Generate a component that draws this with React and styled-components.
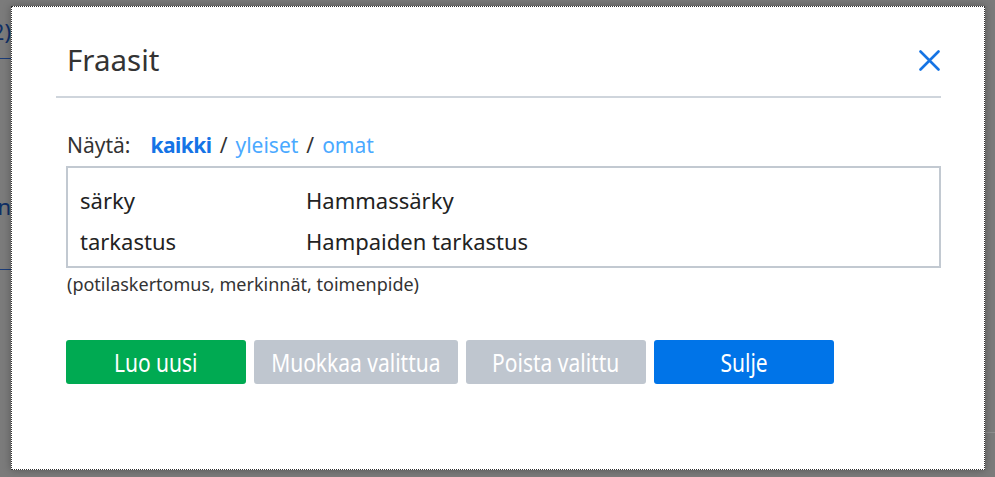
import React from "react";
import styled, { createGlobalStyle } from "styled-components";

const Global = createGlobalStyle`
  html, body {
    margin: 0;
    padding: 0;
    background: #7a7a7a;
  }
  body {
    font-family: "Noto Sans", "Open Sans", sans-serif;
    color: #333;
  }
`;

const Page = styled.div`
  position: relative;
  width: 995px;
  height: 477px;
  overflow: hidden;
  background: #7b7b7b;
`;

const Backdrop = styled.div`
  display: flex;
  justify-content: space-between;
  height: 100%;
`;

const SideStrip = styled.div`
  width: 11px;
  overflow: hidden;
  display: flex;
  flex-direction: column;
  align-items: flex-end;
  color: #0f2f66;
`;

const StripText = styled.div`
  white-space: nowrap;
  font-size: 22px;
  line-height: 26px;
  margin-top: ${(p) => p.$top}px;
`;

const StripLine = styled.div`
  width: 100%;
  height: 1px;
  flex-shrink: 0;
  background: ${(p) => p.$color || "#1b3c78"};
  margin-top: ${(p) => p.$top}px;
`;

const Dialog = styled.div`
  position: absolute;
  top: 6px;
  left: 11px;
  width: 974px;
  height: 464px;
  box-sizing: border-box;
  background: #fff;
  border: 1px dotted #333;
  padding: 0 43px 0 44px;
  box-shadow: 0 0 8px rgba(0, 0, 0, 0.3);
`;

const Header = styled.div`
  display: flex;
  align-items: center;
  justify-content: space-between;
  padding: 35px 1px 18px 11px;
  border-bottom: 2px solid #cfd5dc;
`;

const Title = styled.h1`
  margin: 0;
  font-size: 29.5px;
  line-height: 36px;
  font-weight: 400;
  color: #333;
`;

const CloseButton = styled.button`
  border: 0;
  background: none;
  padding: 0;
  width: 21px;
  height: 21px;
  cursor: pointer;
  display: flex;
  svg {
    display: block;
  }
`;

const Body = styled.div`
  padding: 33px 0 0 10px;
`;

const FilterRow = styled.div`
  display: flex;
  align-items: center;
  font-size: 21px;
  line-height: 28px;
  padding-left: 1px;
`;

const FilterLabel = styled.span`
  margin-right: 20px;
`;

const FilterLink = styled.a`
  color: ${(p) => (p.$active ? "#1574e6" : "#4aa9ff")};
  font-weight: ${(p) => (p.$active ? 700 : 400)};
  letter-spacing: ${(p) => (p.$active ? "-0.5px" : "0")};
  text-decoration: none;
  cursor: pointer;
`;

const Slash = styled.span`
  margin: 0 8px;
`;

const List = styled.div`
  margin-top: 7px;
  border: 2px solid #c2c9d1;
  padding: 11px 12px 5px;
`;

const Row = styled.div`
  display: grid;
  grid-template-columns: 226px 1fr;
  height: 41px;
  align-items: center;
  font-size: 22px;
  color: #222;
`;

const Note = styled.div`
  margin-top: 5px;
  font-size: 18px;
  line-height: 22px;
  color: #333;
  padding-left: 1px;
`;

const Buttons = styled.div`
  display: flex;
  gap: 8px;
  margin-top: 45px;
`;

const ActionButton = styled.button`
  width: ${(p) => p.$width || 180}px;
  height: 44px;
  border: 0;
  border-radius: 3px;
  background: ${(p) => p.$bg};
  color: #fff;
  font-family: "Noto Sans", sans-serif;
  font-size: 25px;
  padding: 0;
  cursor: ${(p) => (p.disabled ? "default" : "pointer")};
  display: flex;
  align-items: center;
  justify-content: center;
  span {
    display: inline-block;
    white-space: nowrap;
    transform: scaleX(0.84);
  }
`;

const phrases = [
  { key: "särky", text: "Hammassärky" },
  { key: "tarkastus", text: "Hampaiden tarkastus" },
];

export default function App() {
  return (
    <>
      <Global />
      <Page>
        <Backdrop>
          <SideStrip>
            <StripText $top={18}>Hoitojaksot (2)</StripText>
            <StripLine $top={14} />
            <StripText $top={134}>Toimenpiteet ja tutkimukset jatkohoitoon</StripText>
            <StripLine $top={50} />
          </SideStrip>
          <SideStrip>
            <StripLine $top={432} $color="#8e8e8e" />
          </SideStrip>
        </Backdrop>
        <Dialog>
          <Header>
            <Title>Fraasit</Title>
            <CloseButton aria-label="Sulje">
              <svg width="21" height="21" viewBox="0 0 21 21">
                <path
                  d="M1.5 1.5 L19.5 19.5 M19.5 1.5 L1.5 19.5"
                  stroke="#1674e4"
                  strokeWidth="2.6"
                  strokeLinecap="round"
                />
              </svg>
            </CloseButton>
          </Header>
          <Body>
            <FilterRow>
              <FilterLabel>Näytä:</FilterLabel>
              <FilterLink $active>kaikki</FilterLink>
              <Slash>/</Slash>
              <FilterLink>yleiset</FilterLink>
              <Slash>/</Slash>
              <FilterLink>omat</FilterLink>
            </FilterRow>
            <List>
              {phrases.map((p) => (
                <Row key={p.key}>
                  <span>{p.key}</span>
                  <span>{p.text}</span>
                </Row>
              ))}
            </List>
            <Note>(potilaskertomus, merkinnät, toimenpide)</Note>
            <Buttons>
              <ActionButton $bg="#00aa52">
                <span>Luo uusi</span>
              </ActionButton>
              <ActionButton $bg="#bfc6cf" $width={204} disabled>
                <span>Muokkaa valittua</span>
              </ActionButton>
              <ActionButton $bg="#bfc6cf" disabled>
                <span>Poista valittu</span>
              </ActionButton>
              <ActionButton $bg="#0074e8">
                <span>Sulje</span>
              </ActionButton>
            </Buttons>
          </Body>
        </Dialog>
      </Page>
    </>
  );
}
